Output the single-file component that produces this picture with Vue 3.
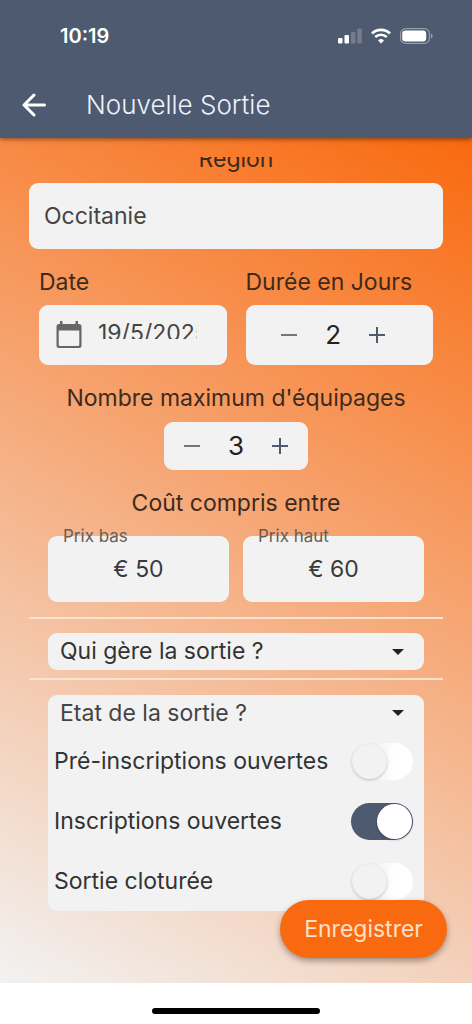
<script setup>
import { ref } from 'vue'

const region = ref('Occitanie')
const date = ref('19/5/2025')
const days = ref(2)
const crews = ref(3)
const low = ref('€ 50')
const high = ref('€ 60')
const manager = ref('')
const stateOpen = ref(true)
const states = ref([
  { id: 'pre', label: 'Pré-inscriptions ouvertes', on: false },
  { id: 'open', label: 'Inscriptions ouvertes', on: true },
  { id: 'closed', label: 'Sortie cloturée', on: false },
])
</script>

<template>
  <div class="page">
    <header class="header">
      <div class="status">
        <span class="time">10:19</span>
        <div class="indicators">
          <svg width="24" height="16" viewBox="0 0 24 16" aria-hidden="true">
            <rect x="0" y="10" width="4.500" height="5.500" rx="1.2" fill="#fff" />
            <rect x="6.500" y="7" width="4.500" height="8.500" rx="1.2" fill="#fff" />
            <rect x="13" y="4" width="4.500" height="11.500" rx="1.2" fill="#fff" opacity=".22" />
            <rect x="19.300" y="0.500" width="4.500" height="15" rx="1.2" fill="#fff" opacity=".22" />
          </svg>
          <svg width="20" height="16" viewBox="0 0 20 16" fill="none" stroke="#fff" aria-hidden="true">
            <path d="M1 5.400a13 13 0 0 1 18 0" stroke-width="2.8" />
            <path d="M4.200 9a8.500 8.500 0 0 1 11.600 0" stroke-width="2.600" />
            <path d="M10 15.500l-3-3.100a4.400 4.400 0 0 1 6 0z" fill="#fff" stroke="none" />
          </svg>
          <svg width="33" height="16" viewBox="0 0 33 16" aria-hidden="true">
            <rect x=".6" y=".6" width="28.8" height="14.8" rx="5" fill="none" stroke="#fff" stroke-opacity=".4" stroke-width="1.2" />
            <rect x="2.2" y="2.5" width="24" height="11" rx="3.2" fill="#fff" />
            <path d="M31 5.5c2 .8 2 4.2 0 5z" fill="#fff" opacity=".45" />
          </svg>
        </div>
      </div>
      <div class="appbar">
        <button class="back" type="button" aria-label="Retour">
          <svg width="24" height="24" viewBox="0 0 24 24" fill="none" stroke="#fff" stroke-width="3" stroke-linecap="round" stroke-linejoin="round" aria-hidden="true">
            <path d="M22.500 12H2M12 2L2 12l10 10" />
          </svg>
        </button>
        <h1>Nouvelle Sortie</h1>
      </div>
    </header>

    <form class="content" @submit.prevent>
      <label class="region-label" for="region">Région</label>
      <input id="region" v-model="region" class="field region" type="text" />

      <div class="pair">
        <div class="group">
          <label for="date">Date</label>
          <div class="field date">
            <svg width="26" height="28" viewBox="0 0 26 28" aria-hidden="true">
              <path fill="#666" fill-rule="evenodd" d="M4 0h2.500v3h13V0H22v3h1a2.500 2.500 0 0 1 2.500 2.500v19A2.500 2.500 0 0 1 23 27H3a2.500 2.500 0 0 1-2.500-2.500v-19A2.500 2.500 0 0 1 3 3h1zM2.700 9.500v14.300q0 1.200 1.200 1.200h18.200q1.200 0 1.200-1.200V9.500z" />
            </svg>
            <div class="date-clip"><input id="date" v-model="date" type="text" /></div>
          </div>
        </div>
        <div class="group">
          <span class="label">Durée en Jours</span>
          <div class="field stepper tall" role="group" aria-label="Durée en Jours">
            <button type="button" aria-label="Diminuer la durée" @click="days--">
              <svg width="16" height="16" viewBox="0 0 16 16" stroke="#777" stroke-width="2" aria-hidden="true"><path d="M0 8h16" /></svg>
            </button>
            <output>{{ days }}</output>
            <button type="button" aria-label="Augmenter la durée" @click="days++">
              <svg width="16" height="16" viewBox="0 0 16 16" stroke="#4d5a72" stroke-width="2" aria-hidden="true"><path d="M0 8h16M8 0v16" /></svg>
            </button>
          </div>
        </div>
      </div>

      <div class="crews">
        <span class="label">Nombre maximum d'équipages</span>
        <div class="field stepper" role="group" aria-label="Nombre maximum d'équipages">
          <button type="button" aria-label="Diminuer le nombre" @click="crews--">
            <svg width="16" height="16" viewBox="0 0 16 16" stroke="#777" stroke-width="2" aria-hidden="true"><path d="M0 8h16" /></svg>
          </button>
          <output>{{ crews }}</output>
          <button type="button" aria-label="Augmenter le nombre" @click="crews++">
            <svg width="16" height="16" viewBox="0 0 16 16" stroke="#4d5a72" stroke-width="2" aria-hidden="true"><path d="M0 8h16M8 0v16" /></svg>
          </button>
        </div>
      </div>

      <span class="label cost">Coût compris entre</span>
      <div class="prices">
        <div class="price">
          <label for="low">Prix bas</label>
          <input id="low" v-model="low" class="field" type="text" />
        </div>
        <div class="price">
          <label for="high">Prix haut</label>
          <input id="high" v-model="high" class="field" type="text" />
        </div>
      </div>

      <hr />
      <div class="field picker">
        <select v-model="manager" aria-label="Qui gère la sortie ?">
          <option value="">Qui gère la sortie ?</option>
        </select>
        <svg class="caret" width="12" height="6" viewBox="0 0 12 6" aria-hidden="true"><path d="M0 0h12L6 6z" fill="#222" /></svg>
      </div>
      <hr />

      <section class="field state">
        <button class="toggle" type="button" :aria-expanded="stateOpen" @click="stateOpen = !stateOpen">
          <span>Etat de la sortie ?</span>
          <svg width="12" height="6" viewBox="0 0 12 6" aria-hidden="true"><path d="M0 0h12L6 6z" fill="#222" /></svg>
        </button>
        <template v-if="stateOpen">
          <div v-for="s in states" :key="s.id" class="row">
            <label :for="s.id">{{ s.label }}</label>
            <input :id="s.id" v-model="s.on" class="switch" type="checkbox" role="switch" />
          </div>
        </template>
      </section>

      <button class="save" type="submit">Enregistrer</button>
    </form>

    <footer class="home"><div class="home-bar"></div></footer>
  </div>
</template>

<style>
body {
  margin: 0;
  background: #fff;
}
</style>

<style scoped>
.page {
  display: flex;
  flex-direction: column;
  min-height: 100vh;
  font-family: Inter, "Liberation Sans", sans-serif;
  font-size: 23px;
  line-height: 28px;
  color: #333;
}
.page * {
  box-sizing: border-box;
}
button,
input,
select {
  font: inherit;
  color: inherit;
  margin: 0;
  padding: 0;
  border: 0;
  background: none;
}
button {
  cursor: pointer;
}
svg {
  display: block;
  flex: none;
}
.header {
  position: relative;
  background: #4d5a70;
  color: #fff;
  box-shadow: 0 1px 5px rgba(0, 0, 0, 0.5);
}
.status {
  display: flex;
  justify-content: space-between;
  align-items: center;
  height: 72px;
  padding: 0 39px 0 60px;
}
.time {
  font-size: 20px;
  font-weight: 600;
}
.indicators {
  display: flex;
  align-items: center;
  gap: 9px;
}
.appbar {
  display: flex;
  align-items: center;
  gap: 40px;
  height: 66px;
  padding: 0 22px;
}
h1 {
  margin: 0;
  font-size: 26px;
  font-weight: 300;
  color: #eef1fa;
}
.content {
  flex: 1;
  display: flex;
  flex-direction: column;
  padding: 19px 29px 25px;
  background: linear-gradient(209deg, #f9690e, #f2f2f2);
}
.field {
  background: #f2f2f2;
  border-radius: 9px;
}
.region-label {
  display: flex;
  align-items: flex-end;
  justify-content: center;
  height: 16px;
  margin-bottom: 10px;
  overflow: hidden;
}
.region-label,
.group > label,
.label {
  color: #3d2a1e;
}
.region {
  width: 100%;
  height: 66px;
  padding: 0 15px;
  color: #444;
}
.pair {
  display: flex;
  gap: 19px;
  padding: 19px 10px 0;
}
.group {
  flex: 1;
  min-width: 0;
  display: flex;
  flex-direction: column;
  gap: 9px;
}
.date {
  display: flex;
  align-items: center;
  gap: 16px;
  height: 60px;
  padding: 0 30px 0 17px;
}
.date-clip {
  flex: 1;
  min-width: 0;
  height: 20px;
  margin-bottom: 12px;
  overflow: hidden;
}
.date-clip input {
  display: block;
  width: 100%;
  height: 28px;
  color: #444;
}
.stepper {
  display: flex;
  align-items: center;
  justify-content: center;
  gap: 12px;
  height: 48px;
  padding: 0 12px;
}
.stepper.tall {
  height: 60px;
  padding-right: 24px;
}
.stepper button {
  display: flex;
  align-items: center;
  justify-content: center;
  width: 32px;
  height: 32px;
}
.stepper output {
  min-width: 32px;
  text-align: center;
  font-size: 26px;
  color: #222;
}
.crews {
  display: flex;
  flex-direction: column;
  align-items: center;
  gap: 10px;
  padding-top: 19px;
}
.cost {
  margin-top: 19px;
  text-align: center;
}
.prices {
  display: flex;
  gap: 14px;
  padding: 19px 19px 15px;
}
.price {
  position: relative;
  flex: 1;
  min-width: 0;
}
.price label {
  position: absolute;
  top: -12px;
  left: 15px;
  font-size: 17px;
  line-height: 24px;
  color: #6b5c54;
}
.price input {
  display: block;
  width: 100%;
  height: 66px;
  text-align: center;
  color: #3a3a3a;
}
hr {
  width: 100%;
  height: 2px;
  margin: 0;
  border: 0;
  background: #fde3cf;
}
.picker {
  position: relative;
  height: 37px;
  margin: 14px 19px 8px;
}
.picker select {
  display: block;
  width: 100%;
  height: 36px;
  padding: 0 12px;
  appearance: none;
}
.caret {
  position: absolute;
  top: 16px;
  right: 20px;
  pointer-events: none;
}
.state {
  margin: 15px 19px 0;
}
.toggle {
  display: flex;
  align-items: center;
  justify-content: space-between;
  width: 100%;
  height: 36px;
  padding: 0 20px 0 12px;
  color: #444;
}
.row {
  display: flex;
  align-items: center;
  justify-content: space-between;
  height: 60px;
  padding: 0 11px 0 6px;
}
.switch {
  appearance: none;
  display: flex;
  align-items: center;
  width: 62px;
  height: 37px;
  padding: 0 1px;
  border-radius: 19px;
  background: linear-gradient(90deg, #f2f2f2 40%, #fff 70%);
  cursor: pointer;
}
.switch::before {
  content: "";
  width: 35px;
  height: 35px;
  border-radius: 50%;
  background: #f2f2f2;
  box-shadow: 0 1px 3px rgba(0, 0, 0, 0.22);
}
.switch:checked {
  justify-content: flex-end;
  background: #4d5a70;
}
.switch:checked::before {
  background: #fff;
}
.save {
  position: relative;
  align-self: flex-end;
  height: 58px;
  margin: -11px -4px 0 0;
  padding: 0 24px;
  border-radius: 29px;
  background: #f96a10;
  color: #ffe0c8;
  box-shadow: 0 3px 6px rgba(0, 0, 0, 0.35);
}
.home {
  display: flex;
  justify-content: center;
  align-items: flex-end;
  height: 41px;
  padding-bottom: 10px;
  background: #fff;
}
.home-bar {
  width: 168px;
  height: 6px;
  border-radius: 3px;
  background: #000;
}
</style>
